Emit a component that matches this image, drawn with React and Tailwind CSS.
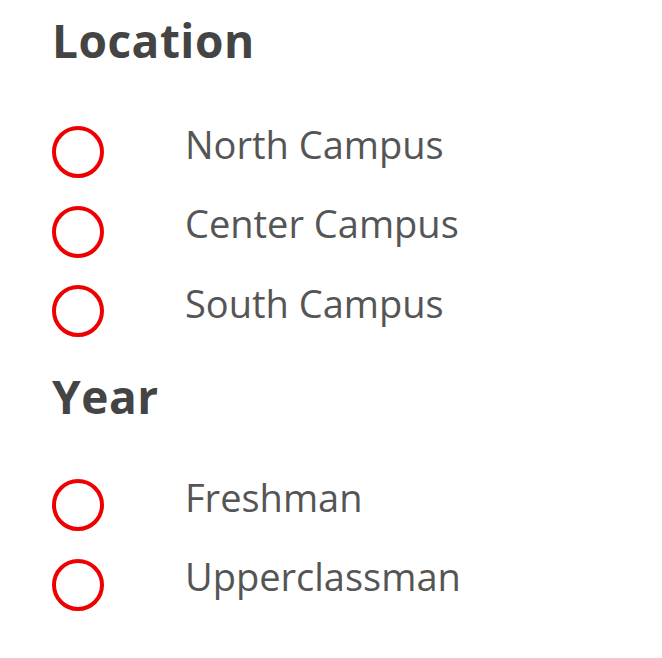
import React from 'react';

const groups = [
  { title: 'Location', items: ['North Campus', 'Center Campus', 'South Campus'] },
  { title: 'Year', items: ['Freshman', 'Upperclassman'] },
];

const Option = ({ label }) => (
  <label className="flex items-center h-[79.5px] cursor-pointer">
    <span className="w-[52px] h-[52px] rounded-full border-[4px] border-[#ee0000] shrink-0" />
    <span className="ml-[81px] mb-[17px] text-[38px] leading-[38px] text-[#555555]">
      {label}
    </span>
  </label>
);

export default function App() {
  return (
    <div
      className="min-h-screen bg-white pl-[52px] pt-[16px]"
      style={{ fontFamily: '"Open Sans", sans-serif' }}
    >
      {/* Location */}
      <h2 className="text-[46px] leading-[48px] font-bold tracking-[0.5px] text-[#444444]">Location</h2>
      <div className="mt-[48.5px] flex flex-col">
        {groups[0].items.map((item) => (
          <Option key={item} label={item} />
        ))}
      </div>

      {/* Year */}
      <h2 className="mt-[20.5px] text-[46px] leading-[48px] font-bold tracking-[0.5px] text-[#444444]">Year</h2>
      <div className="mt-[46px] flex flex-col">
        {groups[1].items.map((item) => (
          <Option key={item} label={item} />
        ))}
      </div>
    </div>
  );
}
